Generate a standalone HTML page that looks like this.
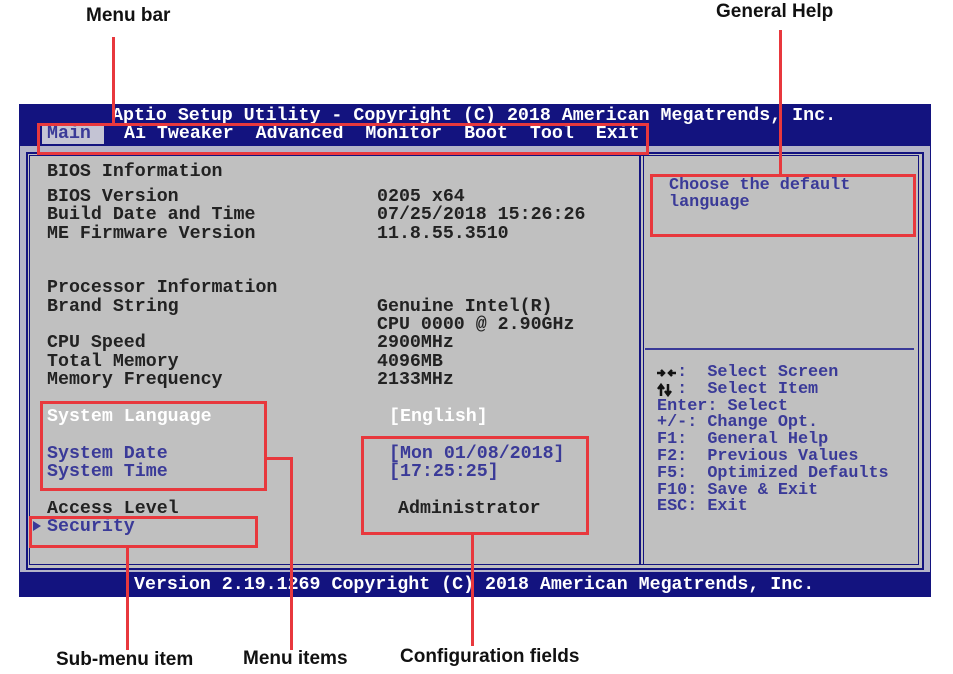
<!DOCTYPE html>
<html><head><meta charset="utf-8"><style>
body{margin:0;width:953px;height:674px;background:#fff;position:relative;overflow:hidden;font-family:"Liberation Mono",monospace;font-weight:bold}
.a{position:absolute;white-space:pre}
.t{font-size:18.3px;line-height:18.3px}
.h{font-size:16.8px;line-height:16.8px;color:#3a3a98}
.r{position:absolute;border:3px solid #e8383d;box-sizing:border-box}
.v{position:absolute;width:3px;background:#e8383d}
.lb{position:absolute;font-family:"Liberation Sans",Arial,sans-serif;font-weight:bold;font-size:19px;color:#111;white-space:pre}
</style></head><body>
<div class="a" style="left:19px;top:104px;width:912px;height:493px;background:#13137f"></div>
<div class="a" style="left:20px;top:146px;width:910px;height:426px;background:#b4b4c8"></div>
<div class="a" style="left:26px;top:152px;width:894px;height:414px;border:2px solid #13137f;background:#c0c0c0"></div>
<div class="a" style="left:29px;top:155px;width:888px;height:408px;border:1px solid #13137f"></div>
<div class="a" style="left:639px;top:155px;width:2px;height:410px;background:#13137f"></div>
<div class="a" style="left:643px;top:155px;width:1px;height:410px;background:#13137f"></div>
<div class="a" style="left:645px;top:348px;width:269px;height:2px;background:#3a3a98"></div>
<div class="a t" style="left:112px;top:107px;color:#fff">Aptio Setup Utility - Copyright (C) 2018 American Megatrends, Inc.</div>
<div class="a" style="left:42px;top:124px;width:62px;height:20px;background:#c4c4d4"></div>
<div class="a t" style="left:47px;top:125px;color:#3a3a98">Main</div>
<div class="a t" style="left:124px;top:125px;color:#fff">Ai Tweaker  Advanced  Monitor  Boot  Tool  Exit</div>
<div class="a t" style="left:47px;top:163px;color:#222">BIOS Information</div>
<div class="a t" style="left:47px;top:188px;color:#222">BIOS Version
Build Date and Time
ME Firmware Version


Processor Information
Brand String

CPU Speed
Total Memory
Memory Frequency</div>
<div class="a t" style="left:377px;top:188px;color:#222">0205 x64
07/25/2018 15:26:26
11.8.55.3510



Genuine Intel(R)
CPU 0000 @ 2.90GHz
2900MHz
4096MB
2133MHz</div>
<div class="a t" style="left:47px;top:408px;color:#fff">System Language</div>
<div class="a t" style="left:389px;top:408px;color:#fff">[English]</div>
<div class="a t" style="left:47px;top:445px;color:#3a3a98">System Date
System Time</div>
<div class="a t" style="left:389px;top:445px;color:#3a3a98">[Mon 01/08/2018]
[17:25:25]</div>
<div class="a t" style="left:47px;top:500px;color:#222">Access Level</div>
<div class="a t" style="left:398px;top:500px;color:#222">Administrator</div>
<div class="a t" style="left:47px;top:518px;color:#3a3a98">Security</div>
<div class="a" style="left:33px;top:521px;width:0;height:0;border-left:8px solid #3a3a98;border-top:5px solid transparent;border-bottom:5px solid transparent"></div>
<div class="a h" style="left:669px;top:178px">Choose the default
language</div>
<div class="a h" style="left:657px;top:365px">  :  Select Screen
  :  Select Item
Enter: Select
+/-: Change Opt.
F1:  General Help
F2:  Previous Values
F5:  Optimized Defaults
F10: Save &amp; Exit
ESC: Exit</div>
<svg class="a" style="left:656px;top:366px" width="22" height="32" viewBox="0 0 22 32">
<path d="M1 7h7M5 4l3 3-3 3M20 7h-7M16 4l-3 3 3 3" stroke="#111" stroke-width="2.5" fill="none"/>
<path d="M5 30V20M2 23l3-4 3 4M12 18v10M9 25l3 4 3-4" stroke="#111" stroke-width="2.5" fill="none"/>
</svg>
<div class="a t" style="left:134px;top:576px;color:#fff">Version 2.19.1269 Copyright (C) 2018 American Megatrends, Inc.</div>
<div class="r" style="left:37px;top:123px;width:612px;height:32px"></div>
<div class="r" style="left:650px;top:174px;width:266px;height:63px"></div>
<div class="r" style="left:40px;top:401px;width:227px;height:90px"></div>
<div class="r" style="left:361px;top:436px;width:228px;height:99px"></div>
<div class="r" style="left:29px;top:516px;width:229px;height:32px"></div>
<div class="v" style="left:112px;top:37px;height:87px"></div>
<div class="v" style="left:779px;top:30px;height:145px"></div>
<div class="v" style="left:126px;top:547px;height:103px"></div>
<div class="a" style="left:266px;top:457px;width:27px;height:3px;background:#e8383d"></div>
<div class="v" style="left:290px;top:457px;height:193px"></div>
<div class="v" style="left:471px;top:534px;height:112px"></div>
<div class="lb" style="left:86px;top:5px">Menu bar</div>
<div class="lb" style="left:716px;top:1px">General Help</div>
<div class="lb" style="left:56px;top:649px">Sub-menu item</div>
<div class="lb" style="left:243px;top:648px">Menu items</div>
<div class="lb" style="left:400px;top:646px">Configuration fields</div>
</body></html>
